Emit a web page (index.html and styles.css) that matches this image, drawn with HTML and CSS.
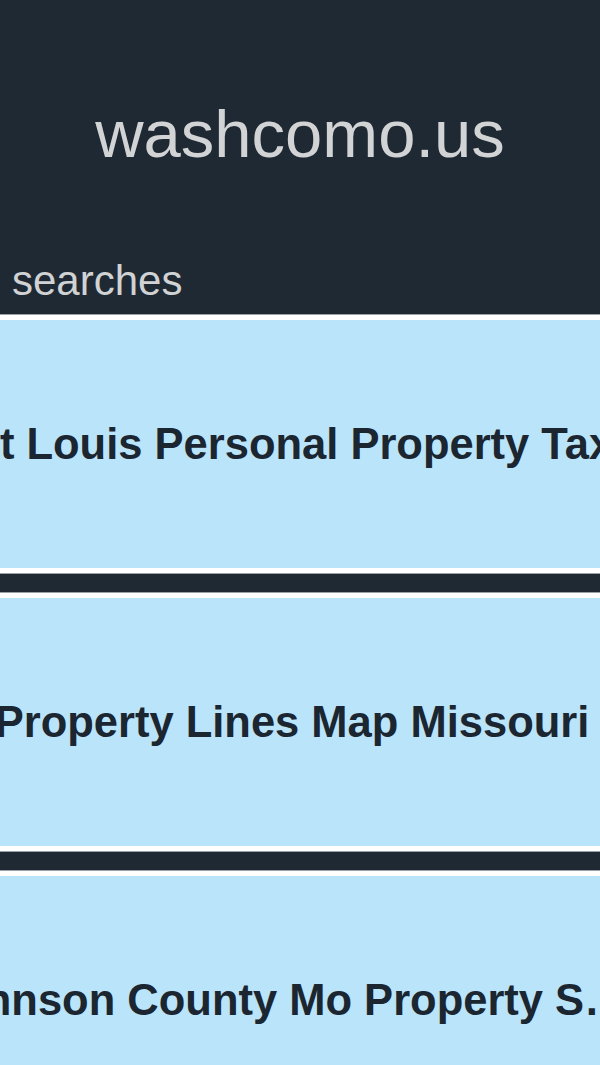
FILE: index.html
```html
<!DOCTYPE html>
<html lang="en">

<head>
	<meta charset="UTF-8">
	<title>washcomo.us</title>
	<link rel="stylesheet" href="styles.css">
</head>

<body>
	<div class="site">

		<header class="top">
			<div class="brand">washcomo.us</div>
			<div class="label">searches</div>
		</header>

		<div class="cards">
			<a class="card" href="#">
				<span class="card-title">St Louis Personal Property Tax</span>
			</a>
			<a class="card" href="#">
				<span class="card-title">Property Lines Map Missouri</span>
			</a>
			<a class="card" href="#">
				<span class="card-title">Johnson County Mo Property Search Records</span>
			</a>
		</div>

	</div>
</body>

</html>
```

FILE: styles.css
```css
* {
	box-sizing: border-box;
}

body {
	margin: 0;
	background: #1f2933;
	font-family: "Liberation Sans", Arial, sans-serif;
	overflow: hidden;
}

.site {
	width: 600px;
	overflow: hidden;
}

.top {
	height: 314px;
	display: flex;
	flex-direction: column;
	background: #1f2933;
}

.brand {
	flex: 1;
	display: flex;
	justify-content: center;
	align-items: center;
	padding-top: 6px;
	font-size: 67px;
	color: #d2d3d5;
}

.label {
	padding: 0 12px 12px;
	font-size: 42px;
	line-height: 1;
	color: #d0d2d4;
}

/* list of cards */

.cards {
	width: 716px;
	margin-left: -66px;
}

.card {
	display: flex;
	align-items: center;
	height: 258px;
	margin: 1px 0 20px;
	border-top: 5px solid #fff;
	border-bottom: 5px solid #fff;
	box-shadow: 0 0 0 1px #9aa1a9;
	background: #b9e4fa;
	text-decoration: none;
}

.card-title {
	display: block;
	width: 100%;
	overflow: hidden;
	white-space: nowrap;
	text-overflow: ellipsis;
	text-align: center;
	font-size: 43.5px;
	font-weight: bold;
	color: #1b2631;
}
```
